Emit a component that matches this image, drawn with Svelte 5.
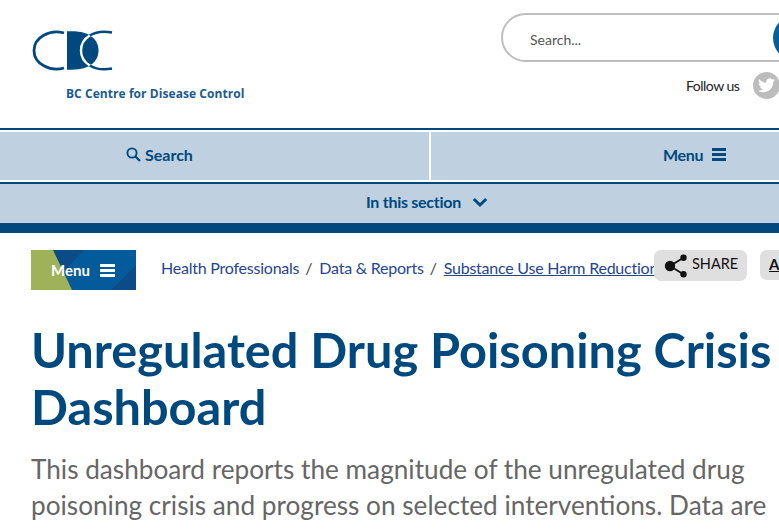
<script>
  const crumbs = ['Health Professionals', 'Data & Reports'];
</script>

<div class="page">
  <header class="top">
    <a class="logo" href="#top">
      <svg width="84" height="42" viewBox="0 0 84 42" aria-hidden="true">
        <defs>
          <clipPath id="dshape"><path d="M37 1.300H42C60 1.300 68.500 10 68.500 20.500S60 39.700 42 39.700H37Z"/></clipPath>
        </defs>
        <path d="M34 3C20 -1 4 7 4 20.500S20 42 34 38" fill="none" stroke="#00497f" stroke-width="2.800"/>
        <path d="M37 1.300H42C60 1.300 68.500 10 68.500 20.500S60 39.700 42 39.700H37Z" fill="#00497f"/>
        <path d="M82 2.500C64 -1 51 8 51 20.500S64 42 82 38.500" fill="none" stroke="#00497f" stroke-width="2.400"/>
        <path d="M82 2.500C64 -1 51 8 51 20.500S64 42 82 38.500" fill="none" stroke="#fff" stroke-width="2.400" clip-path="url(#dshape)"/>
      </svg>
      <span class="logo-text">BC Centre for Disease Control</span>
    </a>
    <div class="tools">
      <div class="search">
        <span class="placeholder">Search...</span>
        <span class="go"></span>
      </div>
      <div class="follow">
        <span>Follow us</span>
        <span class="tw">
          <svg width="17" height="15" viewBox="0 0 24 20" aria-hidden="true"><path fill="#fff" d="M23.900 2.400c-.9.400-1.800.7-2.800.8 1-.6 1.800-1.600 2.200-2.700-1 .6-2 1-3.100 1.200A4.900 4.900 0 0 0 11.800 6.200C7.700 6 4.100 4.100 1.700.9c-1.300 2.300-.6 5.100 1.500 6.600-.8 0-1.600-.2-2.200-.6 0 2.400 1.700 4.400 3.900 4.900-.7.200-1.500.2-2.200.1.600 1.900 2.400 3.300 4.600 3.400A9.900 9.900 0 0 1 0 17.300 13.900 13.900 0 0 0 7.500 19.500c9.100 0 14.300-7.700 14-14.600 1-.7 1.800-1.500 2.400-2.500Z"/></svg>
        </span>
      </div>
    </div>
  </header>

  <nav class="mobile">
    <div class="cell">
      <svg width="15" height="15" viewBox="0 0 15 15" aria-hidden="true"><circle cx="6" cy="6" r="4.600" fill="none" stroke="#00497f" stroke-width="1.900"/><path d="M9.500 9.500 14 14" stroke="#00497f" stroke-width="2.200"/></svg>
      <span>Search</span>
    </div>
    <div class="cell right">
      <span>Menu</span>
      <svg class="bars" width="14" height="13" viewBox="0 0 14 13" aria-hidden="true"><path d="M0 0h14v3H0zM0 5h14v3H0zM0 10h14v3H0z" fill="#00497f"/></svg>
    </div>
  </nav>

  <div class="section">
    <span>In this section</span>
    <svg width="16" height="11" viewBox="0 0 16 11" aria-hidden="true"><path d="M1.800 2 8 8l6.200-6" fill="none" stroke="#00497f" stroke-width="3"/></svg>
  </div>

  <main class="content">
    <div class="crumbrow">
      <div class="menubtn">
        <svg class="menubg" width="105" height="40" viewBox="0 0 105 40" aria-hidden="true">
          <rect width="105" height="40" fill="#045b9c"/>
          <path d="M22 0H53L32 22Z" fill="#0b4b86"/>
          <path d="M105 15V40H80Z" fill="#0b4b86"/>
          <path d="M0 0H22L41 40H0Z" fill="#9fb25a"/>
        </svg>
        <span>Menu</span>
        <svg class="lines" width="15" height="13" viewBox="0 0 15 13" aria-hidden="true"><path d="M0 0h15v3H0zM0 5h15v3H0zM0 10h15v3H0z" fill="#fff"/></svg>
      </div>
      <div class="crumbs">
        {#each crumbs as c}
          <a href="#top">{c}</a><span class="sep">/</span>
        {/each}
        <a class="current" href="#top">Substance Use Harm Reduction</a>
      </div>
      <div class="share">
        <svg width="24" height="24" viewBox="0 0 24 24" aria-hidden="true"><g fill="#111"><circle cx="6" cy="12" r="5.200"/><circle cx="19.500" cy="3.800" r="3.200"/><circle cx="19.500" cy="20.200" r="3.200"/></g><path d="M19 4 6 12l13 8" fill="none" stroke="#111" stroke-width="1.800"/></svg>
        <span>SHARE</span>
      </div>
      <div class="textsize"><span>A</span></div>
    </div>

    <h1>Unregulated Drug Poisoning Crisis Dashboard</h1>
    <p>This dashboard reports the magnitude of the unregulated drug poisoning crisis and progress on selected interventions. Data are</p>
  </main>
</div>

<style>
  :global(body) {
    margin: 0;
    background: #fff;
    overflow: hidden;
  }
  .page {
    width: 779px;
    height: 530px;
    overflow: hidden;
    font-family: Lato, sans-serif;
  }
  .top {
    height: 128px;
    border-bottom: 2px solid #00497f;
    display: flex;
    justify-content: space-between;
  }
  .logo {
    display: block;
    margin: 30px 0 0 30px;
    text-decoration: none;
  }
  .logo svg {
    display: block;
  }
  .logo-text {
    display: block;
    margin: 15px 0 0 36px;
    font: 700 12px/14px "Open Sans", sans-serif;
    color: #1d5a8f;
    white-space: nowrap;
    letter-spacing: 0.06px;
  }
  .tools {
    width: 278px;
    padding-top: 13px;
    flex: none;
  }
  .search {
    width: 320px;
    height: 49px;
    box-sizing: border-box;
    border: 2px solid #bfbfbf;
    border-radius: 25px;
    display: flex;
    align-items: center;
    padding: 3px 0 0 27px;
    position: relative;
  }
  .placeholder {
    font-size: 14px;
    color: #555;
  }
  .go {
    position: absolute;
    left: 270px;
    top: 0;
    width: 46px;
    height: 46px;
    border-radius: 50%;
    background: linear-gradient(135deg, #0a66a8, #00497f);
  }
  .follow {
    display: flex;
    align-items: center;
    margin: 9px 0 0 185px;
    gap: 14px;
    font-size: 14px;
    letter-spacing: -0.5px;
    color: #222;
    white-space: nowrap;
  }
  .tw {
    width: 27px;
    height: 27px;
    margin-top: 1px;
    border-radius: 50%;
    background: #bcbcbc;
    flex: none;
    display: flex;
    align-items: center;
    justify-content: center;
  }
  .mobile {
    display: flex;
    margin-top: 2px;
    height: 48px;
    gap: 2px;
    color: #00497f;
    font-size: 16px;
    font-weight: 700;
  }
  .cell {
    width: 429px;
    flex: none;
    background: #bfd0e0;
    display: flex;
    align-items: center;
    gap: 4px;
    padding: 0 0 3px 126px;
    box-sizing: border-box;
  }
  .cell.right {
    width: 348px;
    padding-left: 232px;
    letter-spacing: -0.3px;
  }
  .bars {
    margin-left: 5px;
  }
  .section {
    margin-top: 2px;
    border-top: 2px solid #00497f;
    border-bottom: 10px solid #00497f;
    height: 39px;
    box-sizing: content-box;
    background: #bfd0e0;
    display: flex;
    align-items: center;
    padding: 0 0 0 366px;
    gap: 11px;
    color: #00497f;
    font-size: 16px;
    font-weight: 700;
    letter-spacing: -0.27px;
  }
  .section span {
    margin-bottom: 4px;
  }
  .section svg {
    margin-bottom: 3px;
  }
  .content {
    padding: 17px 0 0 31px;
  }
  .crumbrow {
    display: flex;
    align-items: flex-start;
    height: 40px;
    width: 800px;
  }
  .menubtn {
    width: 105px;
    height: 40px;
    flex: none;
    box-sizing: border-box;
    padding-left: 20px;
    display: flex;
    align-items: center;
    gap: 10px;
    color: #fff;
    font-size: 15px;
    font-weight: 700;
    position: relative;
  }
  .menubg {
    position: absolute;
    left: 0;
    top: 0;
  }
  .menubtn span,
  .menubtn .lines {
    position: relative;
  }
  .menubtn span {
    margin-bottom: 1px;
  }
  .crumbs {
    margin-left: 25px;
    display: flex;
    height: 34px;
    align-items: center;
    font-size: 16px;
    letter-spacing: -0.23px;
    white-space: nowrap;
    color: #444;
    width: 493px;
    flex: none;
  }
  .crumbs a {
    color: #26458f;
    text-decoration: none;
  }
  .crumbs a.current {
    text-decoration: underline;
  }
  .sep {
    margin: 0 7px 0 6px;
  }
  .share {
    width: 93px;
    height: 31px;
    background: #dfdfdf;
    border-radius: 7px;
    box-sizing: border-box;
    padding-left: 10px;
    display: flex;
    align-items: center;
    gap: 4px;
    font-size: 14.500px;
    color: #111;
    flex: none;
  }
  .share span {
    margin-bottom: 4px;
  }
  .textsize {
    width: 40px;
    height: 30px;
    margin-left: 13px;
    background: #dfdfdf;
    border-radius: 7px;
    box-sizing: border-box;
    padding-left: 9px;
    line-height: 28px;
    font-weight: 700;
    font-size: 15px;
    color: #111;
    flex: none;
  }
  .textsize span {
    text-decoration: underline;
  }
  h1 {
    margin: 31px 0 0;
    width: 748px;
    color: #00497f;
    font-size: 48.700px;
    line-height: 57px;
    font-weight: 700;
  }
  p {
    margin: 16px 0 0;
    width: 745px;
    color: #666;
    font-size: 26.200px;
    line-height: 36px;
  }
</style>
